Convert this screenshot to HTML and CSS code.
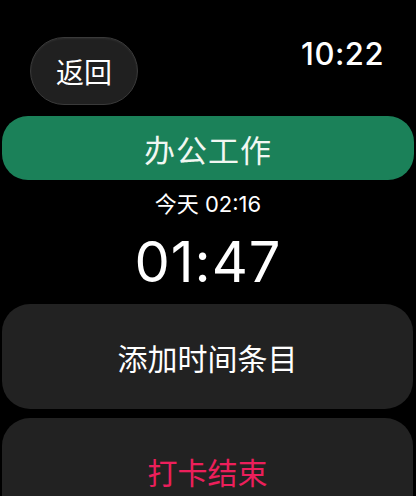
FILE: index.html
```html
<!DOCTYPE html>
<html lang="zh">
<head>
<meta charset="utf-8">
<link rel="stylesheet" href="styles.css">
</head>
<body>
<div class="screen">
  <header class="topbar">
    <button class="back">返回</button>
    <div class="clock">10:22</div>
  </header>
  <div class="task">办公工作</div>
  <div class="started">今天 02:16</div>
  <div class="elapsed">01:47</div>
  <div class="actions">
    <button class="card">添加时间条目</button>
    <button class="card stop">打卡结束</button>
  </div>
</div>
</body>
</html>
```
FILE: styles.css
```css
html, body {
  margin: 0;
  padding: 0;
  background: #000;
}

.screen {
  width: 416px;
  height: 496px;
  overflow: hidden;
  color: #fff;
  font-family: Inter, "Noto Sans CJK SC", sans-serif;
  display: flex;
  flex-direction: column;
}

.screen > * {
  flex-shrink: 0;
}

.topbar {
  display: flex;
  justify-content: space-between;
  align-items: flex-start;
  padding: 37px 32px 0 30px;
}

.back {
  width: 108px;
  height: 68px;
  border-radius: 34px;
  background: #202020;
  border: 1px solid #3a3a3a;
  color: #fff;
  font-family: "Noto Sans CJK SC", sans-serif;
  font-size: 28px;
  padding: 0;
  box-shadow: inset 0 1px 2px rgba(255,255,255,0.06);
}

.clock {
  font-size: 31px;
  font-weight: 500;
  line-height: 1;
  margin-top: 1px;
  letter-spacing: 0.5px;
}

.task {
  margin: 11px 2px 0;
  height: 64px;
  border-radius: 26px;
  background: #1b8159;
  display: flex;
  align-items: center;
  justify-content: center;
  font-family: "Noto Sans CJK SC", sans-serif;
  font-size: 31px;
  color: #f2f7f2;
  letter-spacing: 1px;
}

.started {
  margin-top: 10px;
  text-align: center;
  font-size: 22px;
  line-height: 28px;
}

.elapsed {
  margin-top: 11px;
  text-align: center;
  font-size: 56px;
  font-weight: 400;
  line-height: 66px;
  letter-spacing: 1px;
}

.actions {
  margin-top: 9px;
  display: flex;
  flex-direction: column;
  gap: 9px;
  padding: 0 3px 0 2px;
}

.card {
  height: 105px;
  flex-shrink: 0;
  border: none;
  border-radius: 28px;
  background: #222;
  color: #fff;
  font-family: "Noto Sans CJK SC", sans-serif;
  font-size: 30px;
  padding: 0;
}

.stop {
  color: #ec1f5b;
}
```
